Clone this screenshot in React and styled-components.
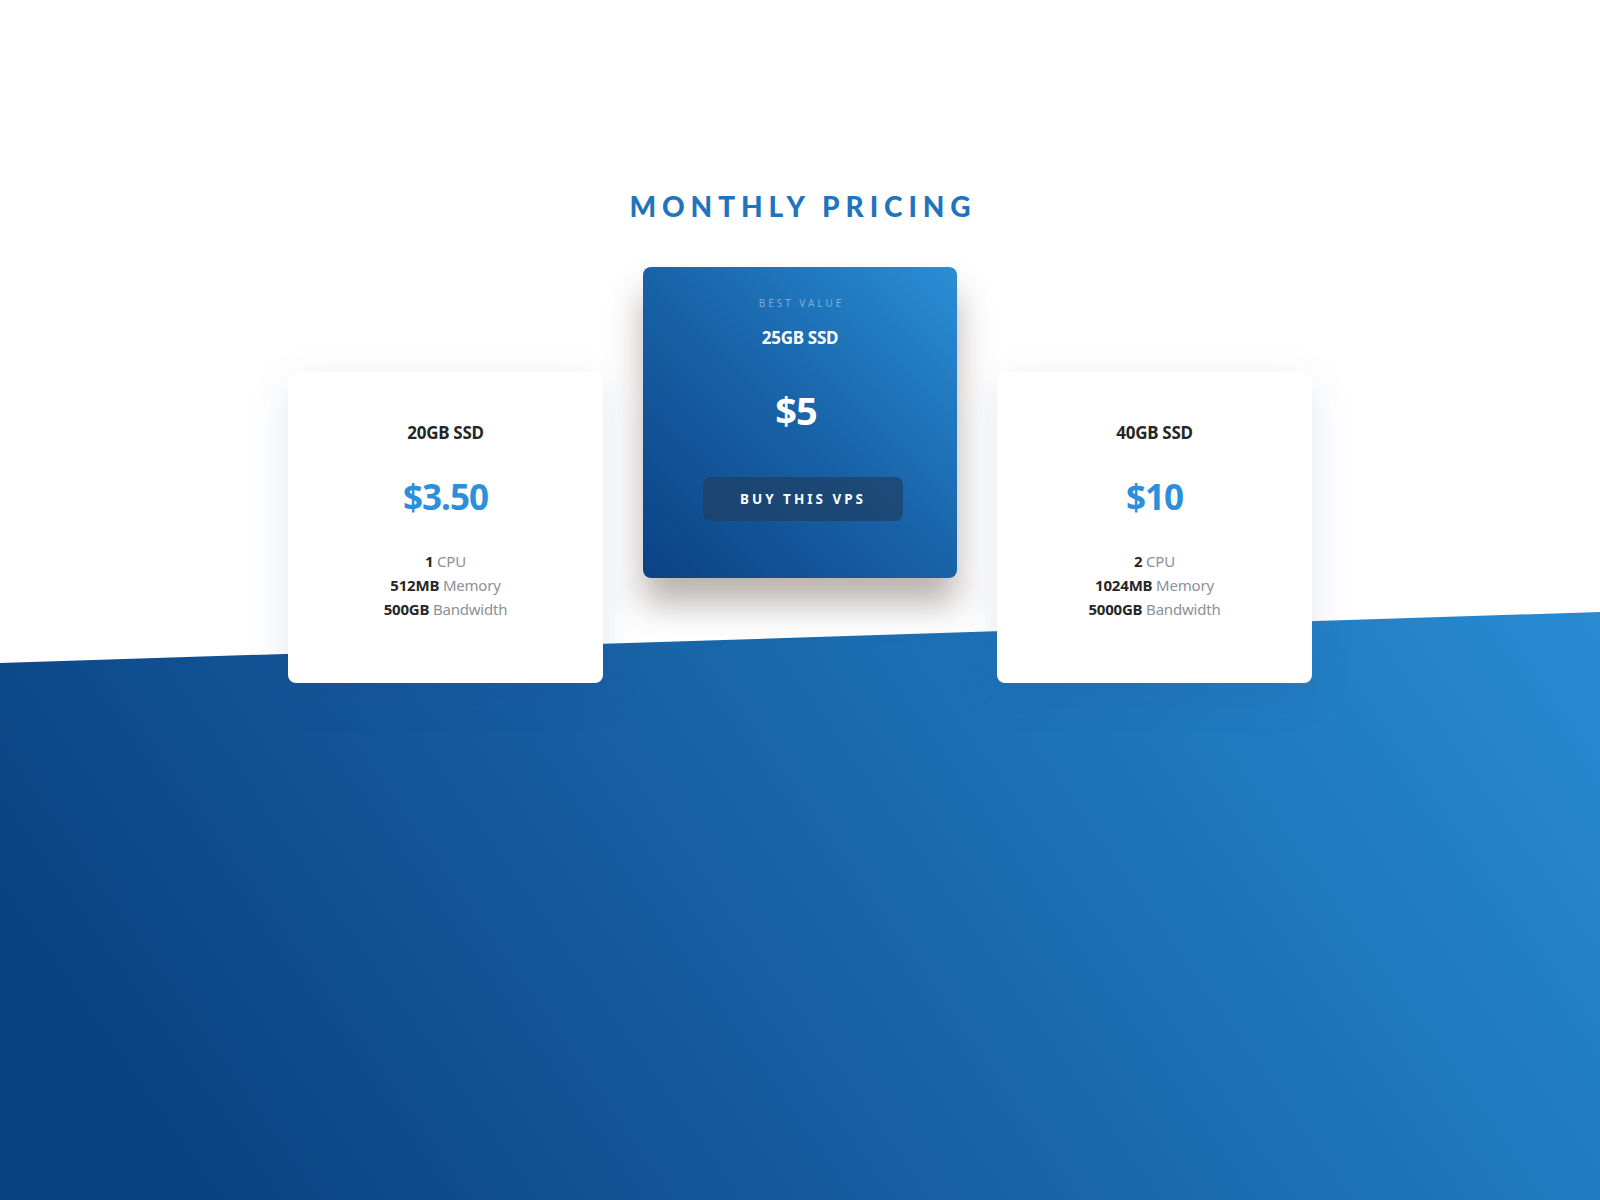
import React from 'react'
import styled, { createGlobalStyle } from 'styled-components'

const GlobalStyle = createGlobalStyle`
  html, body {
    margin: 0;
    padding: 0;
    background: #ffffff;
  }
  * {
    box-sizing: border-box;
  }
`

const plans = [
  {
    id: 'small',
    title: '20GB SSD',
    price: '$3.50',
    specs: [
      ['1', 'CPU'],
      ['512MB', 'Memory'],
      ['500GB', 'Bandwidth'],
    ],
  },
  {
    id: 'medium',
    featured: true,
    title: '25GB SSD',
    price: '$5',
  },
  {
    id: 'large',
    title: '40GB SSD',
    price: '$10',
    specs: [
      ['2', 'CPU'],
      ['1024MB', 'Memory'],
      ['5000GB', 'Bandwidth'],
    ],
  },
]

export default function App() {
  return (
    <>
      <GlobalStyle />
      <Page>
        <Heading>Monthly Pricing</Heading>
        <Row>
          {plans.map((plan) =>
            plan.featured ? (
              <FeaturedCard key={plan.id}>
                <Badge>Best Value</Badge>
                <PlanTitle $light>{plan.title}</PlanTitle>
                <Price $light>{plan.price}</Price>
                <BuyButton type="button">Buy this VPS</BuyButton>
              </FeaturedCard>
            ) : (
              <Card key={plan.id}>
                <PlanTitle>{plan.title}</PlanTitle>
                <Price>{plan.price}</Price>
                <Specs>
                  {plan.specs.map(([value, label]) => (
                    <Spec key={label}>
                      <strong>{value}</strong> {label}
                    </Spec>
                  ))}
                </Specs>
              </Card>
            )
          )}
        </Row>
      </Page>
    </>
  )
}

const Page = styled.main`
  position: relative;
  isolation: isolate;
  min-height: 1200px;
  overflow: hidden;
  padding-top: 192px;
  display: flex;
  flex-direction: column;
  align-items: center;
  font-family: 'Noto Sans', 'Open Sans', sans-serif;
  background: #ffffff;

  /* slanted blue band behind the cards */
  &::before {
    content: '';
    position: absolute;
    inset: 0;
    z-index: -1;
    background: linear-gradient(55deg, #0a4182 8%, #2a91d8 88%);
    clip-path: polygon(0 663px, 100% 612px, 100% 100%, 0 100%);
  }
`

const Heading = styled.h2`
  margin: 0 0 47px;
  font-family: 'Lato', 'Noto Sans', sans-serif;
  font-weight: 900;
  font-size: 28px;
  line-height: 28px;
  letter-spacing: 5.9px;
  text-transform: uppercase;
  color: #1f74bd;
  padding-left: 6px;
`

const Row = styled.div`
  display: flex;
  align-items: flex-start;
  gap: 40px;
`

const Card = styled.section`
  width: 315px;
  height: 311px;
  margin-top: 105px;
  padding: 49px 20px 0;
  display: flex;
  flex-direction: column;
  align-items: center;
  background: #ffffff;
  border-radius: 8px;
  box-shadow: 0 12px 40px rgba(40, 70, 140, 0.13);
`

const FeaturedCard = styled.section`
  width: 314px;
  height: 311px;
  padding: 29px 20px 0;
  display: flex;
  flex-direction: column;
  align-items: center;
  border-radius: 8px;
  background: linear-gradient(to top right, #0b4284 0%, #1862a8 50%, #2a8ed5 100%);
  box-shadow: 0 26px 34px rgba(70, 55, 50, 0.38);
`

const Badge = styled.div`
  font-size: 10px;
  line-height: 14px;
  letter-spacing: 3px;
  text-transform: uppercase;
  color: rgba(255, 255, 255, 0.42);
  margin-bottom: 16px;
  padding-left: 3px;
`

const PlanTitle = styled.h3`
  margin: 0;
  font-size: 17px;
  line-height: 24px;
  font-weight: 700;
  letter-spacing: -0.3px;
  color: ${(p) => (p.$light ? '#ffffff' : '#262626')};
`

const Price = styled.div`
  margin-top: ${(p) => (p.$light ? '36px' : '30px')};
  font-size: ${(p) => (p.$light ? '38px' : '35px')};
  line-height: ${(p) => (p.$light ? '48px' : '44px')};
  font-weight: 700;
  letter-spacing: -1px;
  color: ${(p) => (p.$light ? '#ffffff' : '#2b8fdb')};
  margin-right: ${(p) => (p.$light ? '8px' : '0')};
`

const BuyButton = styled.button`
  margin-top: 43px;
  margin-left: 6px;
  width: 200px;
  height: 44px;
  border: none;
  border-radius: 8px;
  background: rgba(32, 62, 98, 0.7);
  color: #ffffff;
  font-family: inherit;
  font-size: 13.5px;
  font-weight: 700;
  letter-spacing: 3px;
  text-transform: uppercase;
  cursor: pointer;
`

const Specs = styled.ul`
  list-style: none;
  margin: 30px 0 0;
  padding: 0;
  text-align: center;
`

const Spec = styled.li`
  font-size: 15px;
  line-height: 24px;
  color: #8c9098;
  letter-spacing: -0.2px;

  strong {
    color: #262626;
    font-weight: 700;
  }
`
